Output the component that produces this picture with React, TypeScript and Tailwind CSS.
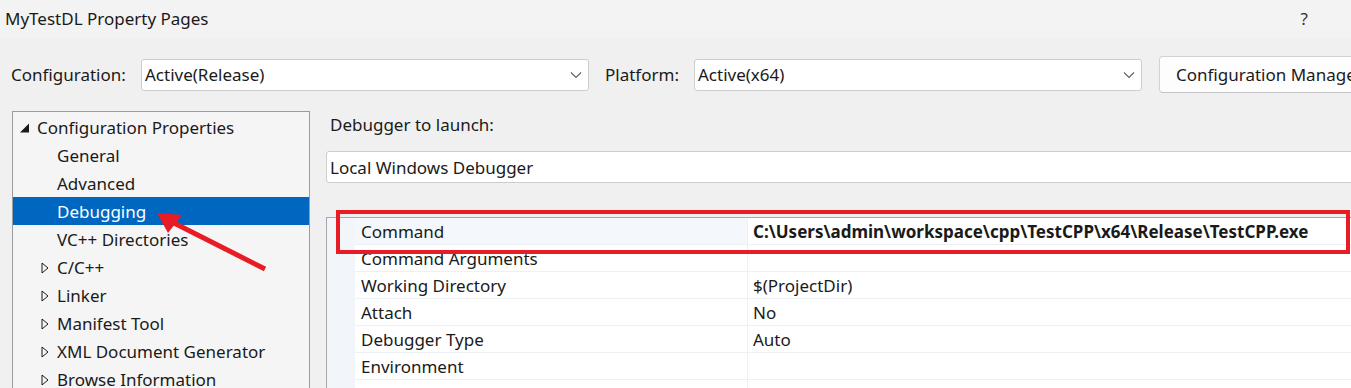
import React from 'react';

const font = { fontFamily: '"Noto Sans", "Open Sans", Arial, sans-serif' };

const tree: { label: string; depth: 0 | 1; mark?: 'open' | 'closed'; selected?: boolean }[] = [
  { label: 'Configuration Properties', depth: 0, mark: 'open' },
  { label: 'General', depth: 1 },
  { label: 'Advanced', depth: 1 },
  { label: 'Debugging', depth: 1, selected: true },
  { label: 'VC++ Directories', depth: 1 },
  { label: 'C/C++', depth: 1, mark: 'closed' },
  { label: 'Linker', depth: 1, mark: 'closed' },
  { label: 'Manifest Tool', depth: 1, mark: 'closed' },
  { label: 'XML Document Generator', depth: 1, mark: 'closed' },
  { label: 'Browse Information', depth: 1, mark: 'closed' },
];

const props = [
  { name: 'Command', value: 'C:\\Users\\admin\\workspace\\cpp\\TestCPP\\x64\\Release\\TestCPP.exe', bold: true, active: true },
  { name: 'Command Arguments', value: '' },
  { name: 'Working Directory', value: '$(ProjectDir)' },
  { name: 'Attach', value: 'No' },
  { name: 'Debugger Type', value: 'Auto' },
  { name: 'Environment', value: '' },
  { name: '', value: '' },
];

function Chevron() {
  return (
    <svg width="12" height="8" viewBox="0 0 12 8" className="shrink-0">
      <path d="M1 1.5 L6 6.5 L11 1.5" fill="none" stroke="#5f5f5f" strokeWidth="1.1" />
    </svg>
  );
}

function Combo({ value }: { value: string }) {
  return (
    <div className="flex h-[32px] w-[448px] shrink-0 items-center justify-between rounded-[3px] border border-[#cdcdcd] bg-white pl-[3px] pr-[6px]">
      <span className="pt-[1px] text-[17px]">{value}</span>
      <Chevron />
    </div>
  );
}

function Mark({ kind }: { kind: 'open' | 'closed' }) {
  if (kind === 'open')
    return (
      <svg width="10" height="10" viewBox="0 0 10 10" className="mr-[7px] ml-[7px] shrink-0">
        <polygon points="9,0.5 9,9.5 0,9.5" fill="#1a1a1a" />
      </svg>
    );
  return (
    <svg width="8" height="12" viewBox="0 0 8 12" className="mr-[8px] ml-[28px] shrink-0">
      <polygon points="1,1 7,6 1,11" fill="none" stroke="#1a1a1a" strokeWidth="1" />
    </svg>
  );
}

export default function App() {
  return (
    <div className="relative h-[388px] w-[1351px] overflow-hidden bg-[#f0f0f0] text-[#1a1a1a]" style={font}>
      {/* title bar */}
      <div className="flex h-[38px] items-center justify-between bg-[#f3f3f3] pl-[5px] pr-[43px]">
        <span className="text-[17px]">MyTestDL Property Pages</span>
        <span className="text-[17px] text-[#333]">?</span>
      </div>

      {/* configuration row */}
      <div className="flex h-[73px] items-center pl-[11px]">
        <span className="w-[130px] shrink-0 pt-[1px] text-[17px]">Configuration:</span>
        <Combo value="Active(Release)" />
        <span className="ml-[16px] w-[89px] shrink-0 pt-[1px] text-[17px]">Platform:</span>
        <Combo value="Active(x64)" />
        <button className="ml-[17px] flex h-[37px] w-[220px] shrink-0 items-center rounded-[4px] border border-[#d3d3d3] border-b-[#c4c4c4] bg-[#fdfdfd] pt-[1px] pl-[16px] text-[17px] whitespace-nowrap">
          Configuration Manager...
        </button>
      </div>

      <div className="flex">
        {/* tree */}
        <div className="ml-[12px] h-[300px] w-[298px] shrink-0 border border-[#9c9c9c] bg-[#f5f5f5] pt-[1px]">
          {tree.map((t) => (
            <div
              key={t.label}
              className={`flex h-[28px] items-center pt-[2px] text-[17px] ${t.selected ? 'bg-[#0067c0] text-white' : ''} ${
                t.mark ? '' : 'pl-[44px]'
              }`}
            >
              {t.mark && <Mark kind={t.mark} />}
              <span>{t.label}</span>
            </div>
          ))}
        </div>

        {/* page */}
        <div className="ml-[16px] flex-1">
          <div className="flex h-[28px] items-center pl-[4px] text-[17px]">Debugger to launch:</div>
          <div className="mt-[12px] flex h-[32px] w-[1040px] items-center rounded-[3px] border border-[#cdcdcd] bg-white pt-[1px] pl-[3px] text-[17px]">
            Local Windows Debugger
          </div>
          <div className="mt-[34px] flex w-[1040px] border-t border-l border-[#a8a8a8]">
            <div className="w-[28px] shrink-0 bg-[#f2f5fa]" />
            <div className="flex-1">
              {props.map((p, i) => (
                <div key={i} className="flex h-[27px] border-b border-[#edf0f5] text-[17px]">
                  <div
                    className={`flex w-[393px] items-center border-r border-[#edf0f5] pt-[2px] pl-[6px] ${
                      p.active ? 'bg-[#f4f7fb]' : 'bg-white'
                    }`}
                  >
                    {p.name}
                  </div>
                  <div className={`flex flex-1 items-center bg-white pt-[2px] pl-[5px] whitespace-nowrap ${p.bold ? 'font-bold' : ''}`}>
                    {p.value}
                  </div>
                </div>
              ))}
            </div>
          </div>
        </div>
      </div>

      {/* annotation: red box around Command row */}
      <div className="absolute top-[210px] left-[336px] h-[44px] w-[1014px] border-4 border-[#e81c24]" />

      {/* annotation: red arrow pointing to Debugging */}
      <svg className="absolute top-0 left-0" width="1351" height="388" viewBox="0 0 1351 388">
        <line x1="265" y1="269" x2="172" y2="222" stroke="#e81c24" strokeWidth="5" />
        <polygon points="157,213 182,215 168,233" fill="#e81c24" />
      </svg>
    </div>
  );
}
